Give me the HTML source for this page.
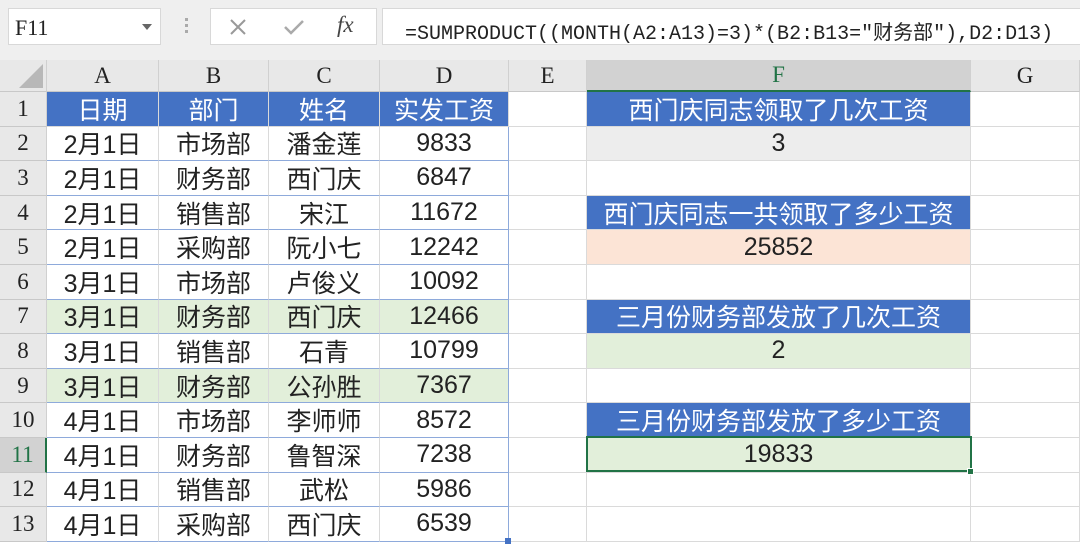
<!DOCTYPE html>
<html><head><meta charset="utf-8"><style>
*{margin:0;padding:0;box-sizing:border-box}
body{width:1080px;height:545px;overflow:hidden;background:#fff;font-family:"Liberation Sans","Noto Sans CJK SC",sans-serif;position:relative}
.top{position:absolute;left:0;top:0;width:1080px;height:60px;background:#efefef}
.box{position:absolute;background:#fff;border:1px solid #d8d8d8}
.hdr{position:absolute;background:#e8e8e8;color:#222;font-family:"Liberation Serif","Noto Serif CJK SC",serif;font-size:23px;display:flex;align-items:center;justify-content:center;border-right:1px solid #d0d0d0;border-bottom:1px solid #c8c8c8}
.c{position:absolute;display:flex;align-items:center;justify-content:center;font-size:25px;color:#222;border-right:1px solid #dadada;border-bottom:1px solid #dadada;white-space:nowrap}
.b{background:#4472c4;color:#fff}
</style></head><body>
<div class="top"></div>
<div class="box" style="left:8px;top:8px;width:153px;height:37px;font-family:'Liberation Serif',serif;font-size:22px;padding:6px 0 0 6px;color:#222">F11<span style="position:absolute;right:8px;top:15px;width:0;height:0;border-left:5px solid transparent;border-right:5px solid transparent;border-top:6px solid #666"></span></div>
<div style="position:absolute;left:185px;top:18px;width:3px;height:3px;background:#aaa;box-shadow:0 6px #aaa,0 12px #aaa"></div>
<div class="box" style="left:210px;top:8px;width:167px;height:37px"></div>
<svg style="position:absolute;left:228px;top:17px" width="20" height="20"><path d="M3 3L17 17M17 3L3 17" stroke="#999" stroke-width="2"/></svg>
<svg style="position:absolute;left:282px;top:17px" width="24" height="20"><path d="M3 10L9 16L21 4" stroke="#aaa" stroke-width="2.5" fill="none"/></svg>
<div style="position:absolute;left:337px;top:12px;font-family:'Liberation Serif',serif;font-style:italic;font-size:23px;color:#444">fx</div>
<div class="box" style="left:382px;top:8px;width:720px;height:37px;font-family:'Liberation Mono','Noto Sans CJK SC',monospace;font-size:20px;padding:7px 0 0 22px;color:#222;white-space:nowrap">=SUMPRODUCT((MONTH(A2:A13)=3)*(B2:B13="财务部"),D2:D13)</div>

<div class="hdr" style="left:0;top:60px;width:47px;height:32px"><svg width="46" height="32" style="position:absolute;left:0;top:0"><path d="M43 4L43 28L19 28Z" fill="#b8b8b8"/></svg></div>
<div class="hdr" style="left:47px;top:60px;width:112px;height:32px">A</div>
<div class="hdr" style="left:159px;top:60px;width:110px;height:32px">B</div>
<div class="hdr" style="left:269px;top:60px;width:111px;height:32px">C</div>
<div class="hdr" style="left:380px;top:60px;width:129px;height:32px">D</div>
<div class="hdr" style="left:509px;top:60px;width:78px;height:32px">E</div>
<div class="hdr" style="left:587px;top:60px;width:384px;height:32px;background:#d2d2d2;color:#217346;border-bottom:2px solid #217346">F</div>
<div class="hdr" style="left:971px;top:60px;width:109px;height:32px">G</div>

<div id="g"></div>
<script>
var rows=[["日期","部门","姓名","实发工资"],["2月1日","市场部","潘金莲","9833"],["2月1日","财务部","西门庆","6847"],["2月1日","销售部","宋江","11672"],["2月1日","采购部","阮小七","12242"],["3月1日","市场部","卢俊义","10092"],["3月1日","财务部","西门庆","12466"],["3月1日","销售部","石青","10799"],["3月1日","财务部","公孙胜","7367"],["4月1日","市场部","李师师","8572"],["4月1日","财务部","鲁智深","7238"],["4月1日","销售部","武松","5986"],["4月1日","采购部","西门庆","6539"]];
var cols=[[47,112],[159,110],[269,111],[380,129],[509,78],[587,384],[971,109]];
var F={1:["西门庆同志领取了几次工资","b"],2:["3","#ededed"],4:["西门庆同志一共领取了多少工资","b"],5:["25852","#fce4d6"],7:["三月份财务部发放了几次工资","b"],8:["2","#e2efda"],10:["三月份财务部发放了多少工资","b"],11:["19833","#e2efda"]};
var h="";
for(var r=0;r<13;r++){
 var t=92+r*34.6, hh=34.6;
 var sel=r==10;
 h+='<div class="hdr" style="left:0;top:'+t+'px;width:47px;height:'+hh+'px;'+(sel?'background:#d2d2d2;color:#217346;border-right:2px solid #217346':'')+'">'+(r+1)+'</div>';
 for(var c=0;c<7;c++){
  var st='left:'+cols[c][0]+'px;top:'+t+'px;width:'+cols[c][1]+'px;height:'+hh+'px;';
  var txt="",cls="c";
  if(c<4){txt=rows[r][c];
   if(r==0)cls+=" b";
   else if(r==6||r==8)st+="background:#e2efda;";
   if(r>0)st+="border-bottom-color:#8eaadb;"+(c==3?"border-right-color:#8eaadb;":"");
  }
  if(c==5&&F[r+1]){txt=F[r+1][0];if(F[r+1][1]=="b")cls+=" b";else st+="background:"+F[r+1][1]+";"}
  h+='<div class="'+cls+'" style="'+st+'">'+txt+'</div>';
 }
}
h+='<div style="position:absolute;left:586px;top:436px;width:386px;height:36px;border:2px solid #217346"></div><div style="position:absolute;left:967px;top:468px;width:7px;height:7px;background:#217346;border:1px solid #fff"></div>';
h+='<div style="position:absolute;left:505px;top:538px;width:6px;height:6px;background:#4472c4"></div>';
document.getElementById("g").innerHTML=h;
</script>
</body></html>
